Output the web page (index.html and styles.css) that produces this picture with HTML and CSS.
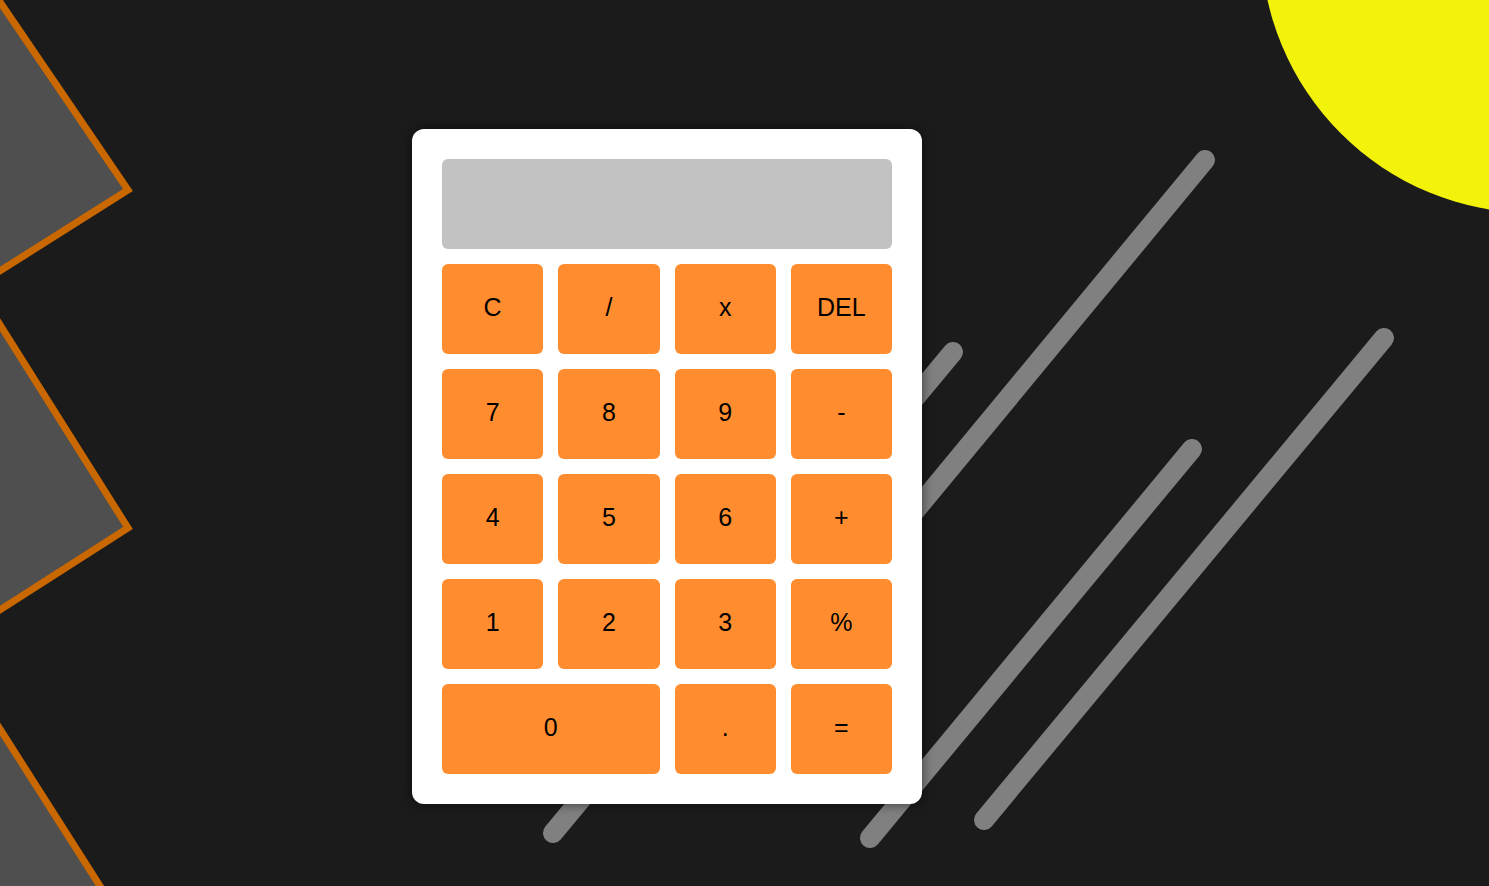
FILE: index.html
```html
<!DOCTYPE html>
<html lang="en">
<head>
<meta charset="utf-8">
<title>Calculator</title>
<link rel="stylesheet" href="styles.css">
</head>
<body>
<svg class="backdrop" width="1489" height="886" viewBox="0 0 1489 886" aria-hidden="true">
  <g class="diamonds">
    <polygon points="-100,-145 128,190 -100,334"/>
    <polygon points="-100,166 128,528 -100,674"/>
    <polygon points="-100,572 128,930 -100,1076"/>
  </g>
  <g class="streaks">
    <line x1="1205" y1="160" x2="700" y2="771"/>
    <line x1="953" y1="352" x2="553" y2="833"/>
    <line x1="1192" y1="449" x2="870" y2="838"/>
    <line x1="1384" y1="338" x2="984" y2="820"/>
  </g>
  <circle class="sun" cx="1533" cy="-59" r="272"/>
</svg>
<main class="stage">
  <div class="calc">
    <div class="display"></div>
    <div class="keys">
      <button class="key">C</button>
      <button class="key">/</button>
      <button class="key">x</button>
      <button class="key">DEL</button>
      <button class="key">7</button>
      <button class="key">8</button>
      <button class="key">9</button>
      <button class="key">-</button>
      <button class="key">4</button>
      <button class="key">5</button>
      <button class="key">6</button>
      <button class="key">+</button>
      <button class="key">1</button>
      <button class="key">2</button>
      <button class="key">3</button>
      <button class="key">%</button>
      <button class="key key-wide">0</button>
      <button class="key">.</button>
      <button class="key">=</button>
    </div>
  </div>
</main>
</body>
</html>
```
FILE: styles.css
```css
html, body {
  margin: 0;
  padding: 0;
}
body {
  width: 1489px;
  height: 886px;
  overflow: hidden;
  background: #1b1b1b;
  font-family: "Liberation Sans", Arial, sans-serif;
  position: relative;
}
.backdrop {
  position: absolute;
  left: 0;
  top: 0;
  display: block;
}
.diamonds polygon {
  fill: #4f4f4f;
  stroke: #c96700;
  stroke-width: 7;
  stroke-linejoin: miter;
}
.streaks line {
  stroke: #808080;
  stroke-width: 20;
  stroke-linecap: round;
}
.sun {
  fill: #f2f20b;
}
.stage {
  position: relative;
  z-index: 1;
  display: flex;
  padding: 129px 0 0 412px;
}
.calc {
  width: 450px;
  padding: 30px;
  background: #ffffff;
  border-radius: 12px;
  box-shadow: 0 0 12px rgba(0, 0, 0, 0.55);
}
.display {
  height: 90px;
  background: #c2c2c2;
  border-radius: 6px;
}
.keys {
  margin-top: 15px;
  display: grid;
  grid-template-columns: repeat(4, 1fr);
  grid-auto-rows: 90px;
  gap: 15px;
}
.key {
  border: none;
  border-radius: 6px;
  background: #ff8d30;
  color: #000;
  font-family: "Liberation Sans", Arial, sans-serif;
  font-size: 25px;
  padding: 0 0 3px;
  margin: 0;
}
.key-wide {
  grid-column: span 2;
}
```
